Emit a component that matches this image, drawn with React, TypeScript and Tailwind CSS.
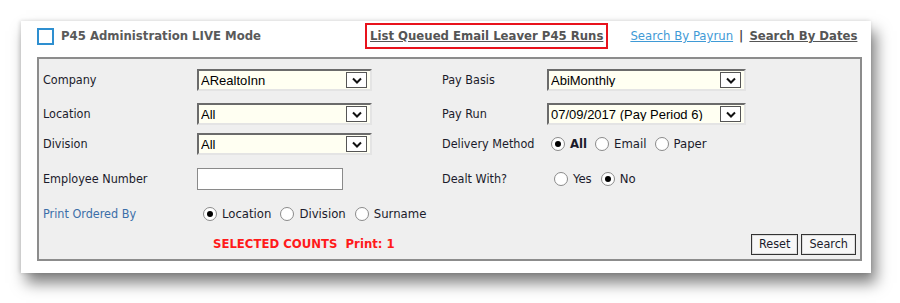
import React from 'react';

/* --------------------------------- Pieces --------------------------------- */

const Chevron = () => (
  <svg width="10" height="7" viewBox="0 0 10 7">
    <polyline points="1,1.5 5,5.5 9,1.5" fill="none" stroke="#111" strokeWidth="2" />
  </svg>
);

const Select: React.FC<{ value: string; width: string }> = ({ value, width }) => (
  <div
    className={`${width} h-[22px] flex items-center bg-[#fffff2] border-2 border-t-[#6b6b6b] border-l-[#6b6b6b] border-r-[#e4e4e4] border-b-[#e4e4e4] pl-[2px] pr-[3px]`}
  >
    <span className="flex-1 text-[13px] text-black font-['Liberation_Sans',sans-serif] leading-none truncate">
      {value}
    </span>
    <span className="w-[21px] h-[16px] flex items-center justify-center bg-white border border-[#555]">
      <Chevron />
    </span>
  </div>
);

const Radio: React.FC<{ label: string; checked?: boolean; bold?: boolean; space?: string }> = ({ label, checked, bold, space = 'mr-[9px]' }) => (
  <label className={`flex items-center gap-[5px] ${space}`}>
    <span className="w-[14px] h-[14px] rounded-full border border-[#8a8a8a] bg-white flex items-center justify-center">
      {checked && <span className="w-[6px] h-[6px] rounded-full bg-black" />}
    </span>
    <span className={`text-[13px] text-[#1b1b2b] ${bold ? 'font-bold' : ''}`}>{label}</span>
  </label>
);

const Label: React.FC<{ children: React.ReactNode; width: string; className?: string }> = ({ children, width, className = '' }) => (
  <div className={`${width} shrink-0 text-[12.5px] ${className || 'text-[#1b1b2b]'}`}>{children}</div>
);

/* ---------------------------------- App ---------------------------------- */

export default function App() {
  return (
    <div className="w-[900px] h-[303px] bg-white pt-[21px] pl-[21px] font-['DejaVu_Sans_Condensed','Liberation_Sans',sans-serif] overflow-hidden">
      <div className="w-[850px] h-[252px] bg-white shadow-[5px_10px_14px_rgba(0,0,0,0.5),-1px_0_4px_rgba(0,0,0,0.15)] pl-[16px] pr-[9px]">

        {/* ------------------------------ Header ------------------------------ */}
        <div className="h-[36px] pb-[6px] flex items-center">
          <span className="w-[17px] h-[17px] border-2 border-[#2e8fd0] bg-white" />
          <span className="ml-[7px] text-[13px] font-bold text-[#5a5a5a]">P45 Administration LIVE Mode</span>

          <div className="ml-[104px] h-[26px] px-[3px] flex items-center border-2 border-[#e8121c]">
            <a className="text-[13px] font-bold text-[#555] underline">List Queued Email Leaver P45 Runs</a>
          </div>

          <a className="ml-[22px] text-[13px] text-[#3f9ad6] underline">Search By Payrun</a>
          <span className="mx-[6px] text-[13px] font-bold text-[#444]">|</span>
          <a className="text-[13px] font-bold text-[#555] underline">Search By Dates</a>
        </div>

        {/* ------------------------------ Panel ------------------------------ */}
        <div className="w-[825px] h-[204px] bg-[#efefef] border-2 border-[#8c8c8c] pl-[4px] pr-[4px] pt-[4px]">

          <div className="h-[34px] flex items-center">
            <Label width="w-[154px]">Company</Label>
            <div className="w-[245px]"><Select value="ARealtoInn" width="w-[175px]" /></div>
            <Label width="w-[105px]">Pay Basis</Label>
            <Select value="AbiMonthly" width="w-[199px]" />
          </div>

          <div className="h-[34px] flex items-center">
            <Label width="w-[154px]">Location</Label>
            <div className="w-[245px]"><Select value="All" width="w-[175px]" /></div>
            <Label width="w-[105px]">Pay Run</Label>
            <Select value="07/09/2017 (Pay Period 6)" width="w-[199px]" />
          </div>

          <div className="h-[26px] flex items-center">
            <Label width="w-[154px]">Division</Label>
            <div className="w-[245px]"><Select value="All" width="w-[175px]" /></div>
            <Label width="w-[109px]">Delivery Method</Label>
            <div className="flex items-center">
              <Radio label="All" checked bold space="mr-[8px]" />
              <Radio label="Email" space="mr-[8px]" />
              <Radio label="Paper" />
            </div>
          </div>

          <div className="h-[44px] flex items-center">
            <Label width="w-[154px]">Employee Number</Label>
            <div className="w-[245px]">
              <div className="w-[146px] h-[22px] bg-white border border-[#8a8a8a]" />
            </div>
            <Label width="w-[112px]">Dealt With?</Label>
            <div className="flex items-center">
              <Radio label="Yes" />
              <Radio label="No" checked />
            </div>
          </div>

          <div className="h-[26px] flex items-center">
            <Label width="w-[160px]" className="text-[#3b6ea8]">Print Ordered By</Label>
            <div className="flex items-center">
              <Radio label="Location" checked />
              <Radio label="Division" />
              <Radio label="Surname" />
            </div>
          </div>

          <div className="h-[34px] flex items-center">
            <div className="w-[170px] shrink-0" />
            <span className="text-[13px] font-bold text-[#ff1a1a] whitespace-pre">SELECTED COUNTS  Print: 1</span>
            <div className="ml-auto flex items-center gap-[3px]">
              <button className="h-[21px] px-[7px] bg-[#f7f7f7] border border-[#333] shadow-[inset_0_0_0_1px_#dcdcdc] text-[12.5px] text-[#1b1b2b] leading-none">
                Reset
              </button>
              <button className="h-[21px] px-[7px] bg-[#f7f7f7] border border-[#333] shadow-[inset_0_0_0_1px_#dcdcdc] text-[12.5px] text-[#1b1b2b] leading-none">
                Search
              </button>
            </div>
          </div>
        </div>
      </div>
    </div>
  );
}
